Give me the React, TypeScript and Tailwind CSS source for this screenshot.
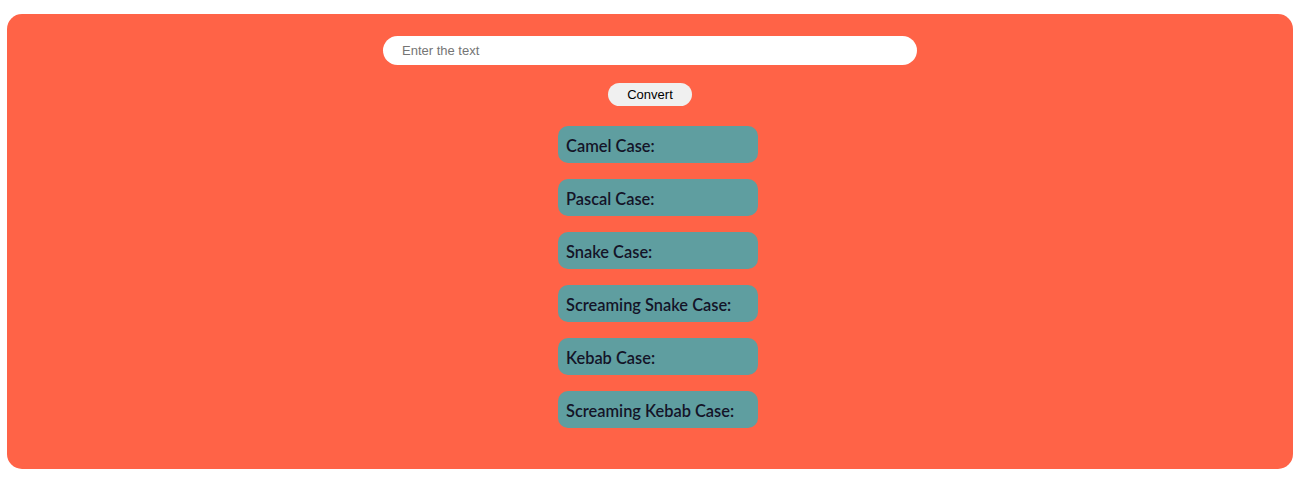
import { useState } from "react";

const cases = [
  "Camel Case:",
  "Pascal Case:",
  "Snake Case:",
  "Screaming Snake Case:",
  "Kebab Case:",
  "Screaming Kebab Case:",
];

export default function App() {
  const [text, setText] = useState("");

  return (
    <div className="bg-white pl-[7px] pr-[9px] pt-[14px] pb-[18px]">
      <div className="flex flex-col items-center rounded-[15px] bg-[#ff6347] pt-[22px] pb-[41px]">
        <input
          value={text}
          onChange={(e) => setText(e.target.value)}
          placeholder="Enter the text"
          className="h-[29px] w-[534px] rounded-full bg-white px-[19px] text-[13px] text-black outline-none placeholder:text-[#757575] font-['Liberation_Sans',Arial,sans-serif]"
        />
        <button className="mt-[18px] h-[23px] w-[84px] rounded-full bg-[#f0f0f0] text-[13px] text-black font-['Liberation_Sans',Arial,sans-serif]">
          Convert
        </button>
        <div className="mt-[20px] ml-[16px] flex flex-col gap-[16px]">
          {cases.map((c) => (
            <div
              key={c}
              className="flex h-[37px] w-[200px] items-center rounded-[10px] bg-[#5f9ea0] px-[8px] pt-[3px] text-[16.4px] font-semibold text-[#141428] font-['Lato','Open_Sans',sans-serif]"
            >
              {c}
            </div>
          ))}
        </div>
      </div>
    </div>
  );
}
